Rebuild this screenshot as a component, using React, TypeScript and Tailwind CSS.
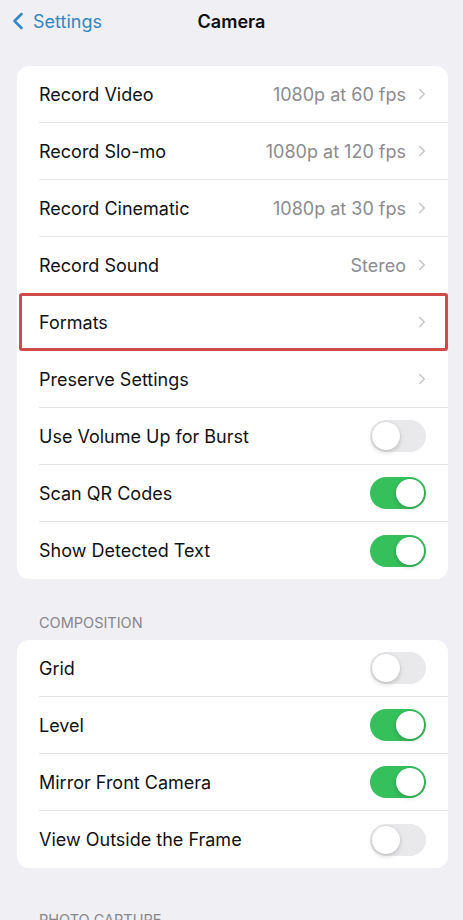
import { ChevronLeft, ChevronRight } from 'lucide-react';

type Row =
  | { label: string; value?: string; kind: 'link'; highlight?: boolean }
  | { label: string; kind: 'toggle'; on: boolean };

const CAMERA_ROWS: Row[] = [
  { label: 'Record Video', value: '1080p at 60 fps', kind: 'link' },
  { label: 'Record Slo-mo', value: '1080p at 120 fps', kind: 'link' },
  { label: 'Record Cinematic', value: '1080p at 30 fps', kind: 'link' },
  { label: 'Record Sound', value: 'Stereo', kind: 'link' },
  { label: 'Formats', kind: 'link', highlight: true },
  { label: 'Preserve Settings', kind: 'link' },
  { label: 'Use Volume Up for Burst', kind: 'toggle', on: false },
  { label: 'Scan QR Codes', kind: 'toggle', on: true },
  { label: 'Show Detected Text', kind: 'toggle', on: true },
];

const COMPOSITION_ROWS: Row[] = [
  { label: 'Grid', kind: 'toggle', on: false },
  { label: 'Level', kind: 'toggle', on: true },
  { label: 'Mirror Front Camera', kind: 'toggle', on: true },
  { label: 'View Outside the Frame', kind: 'toggle', on: false },
];

function Toggle({ on }: { on: boolean }) {
  return (
    <div
      className={
        on
          ? 'w-[56px] h-[32px] rounded-full bg-[#36c05c] flex items-center justify-end p-[2px]'
          : 'w-[56px] h-[32px] rounded-full bg-[#e9e9eb] flex items-center justify-start p-[2px]'
      }
    >
      <div className="w-[28px] h-[28px] rounded-full bg-white shadow-[0_2px_5px_rgba(0,0,0,0.18),0_0_0_0.5px_rgba(0,0,0,0.06)]" />
    </div>
  );
}

function SettingsRow({ row, last }: { row: Row; last: boolean }) {
  return (
    <div className="relative h-[57px] pl-[22px]">
      <div
        className={
          last
            ? 'h-full flex items-center justify-between pr-[22px]'
            : 'h-full flex items-center justify-between pr-[22px] border-b border-[#e4e4e8]'
        }
      >
        <span className="text-[18px] text-[#111114]">{row.label}</span>
        {row.kind === 'link' ? (
          <div className="flex items-center gap-[7px]">
            {row.value && <span className="text-[18px] text-[#8b8b90]">{row.value}</span>}
            <ChevronRight size={18} strokeWidth={2} className="text-[#c5c5c9] -mr-[5px]" />
          </div>
        ) : (
          <Toggle on={row.on} />
        )}
      </div>
      {row.kind === 'link' && row.highlight && (
        <div className="absolute left-[2px] right-0 -top-[1px] bottom-0 border-[3.5px] border-[#d04a4b] rounded-[3px]" />
      )}
    </div>
  );
}

function Group({ rows }: { rows: Row[] }) {
  return (
    <div className="ml-[17px] mr-[15px] bg-white rounded-[12px]">
      {rows.map((r, i) => (
        <SettingsRow key={r.label} row={r} last={i === rows.length - 1} />
      ))}
    </div>
  );
}

export default function App() {
  return (
    <div
      className="w-full h-[920px] overflow-hidden bg-[#f0eff4]"
      style={{ fontFamily: 'Inter, "Liberation Sans", sans-serif' }}
    >
      {/* Nav bar */}
      <div className="relative h-[42px] flex items-center justify-center">
        <div className="absolute left-[4px] top-0 h-full flex items-center text-[#3586c5]">
          <ChevronLeft size={28} strokeWidth={2.2} />
          <span className="text-[18px] ml-[1px]">Settings</span>
        </div>
        <span className="text-[18px] font-semibold text-[#0d0d0f]">Camera</span>
      </div>

      <div className="pt-[24px]">
        <Group rows={CAMERA_ROWS} />
      </div>

      <div className="pt-[35px] pb-[8px] px-[39px] text-[14.5px] text-[#86868b] uppercase leading-[18px]">
        Composition
      </div>
      <Group rows={COMPOSITION_ROWS} />

      <div className="pt-[43px] px-[39px] text-[14.5px] text-[#86868b] uppercase leading-[18px]">
        Photo Capture
      </div>
    </div>
  );
}
